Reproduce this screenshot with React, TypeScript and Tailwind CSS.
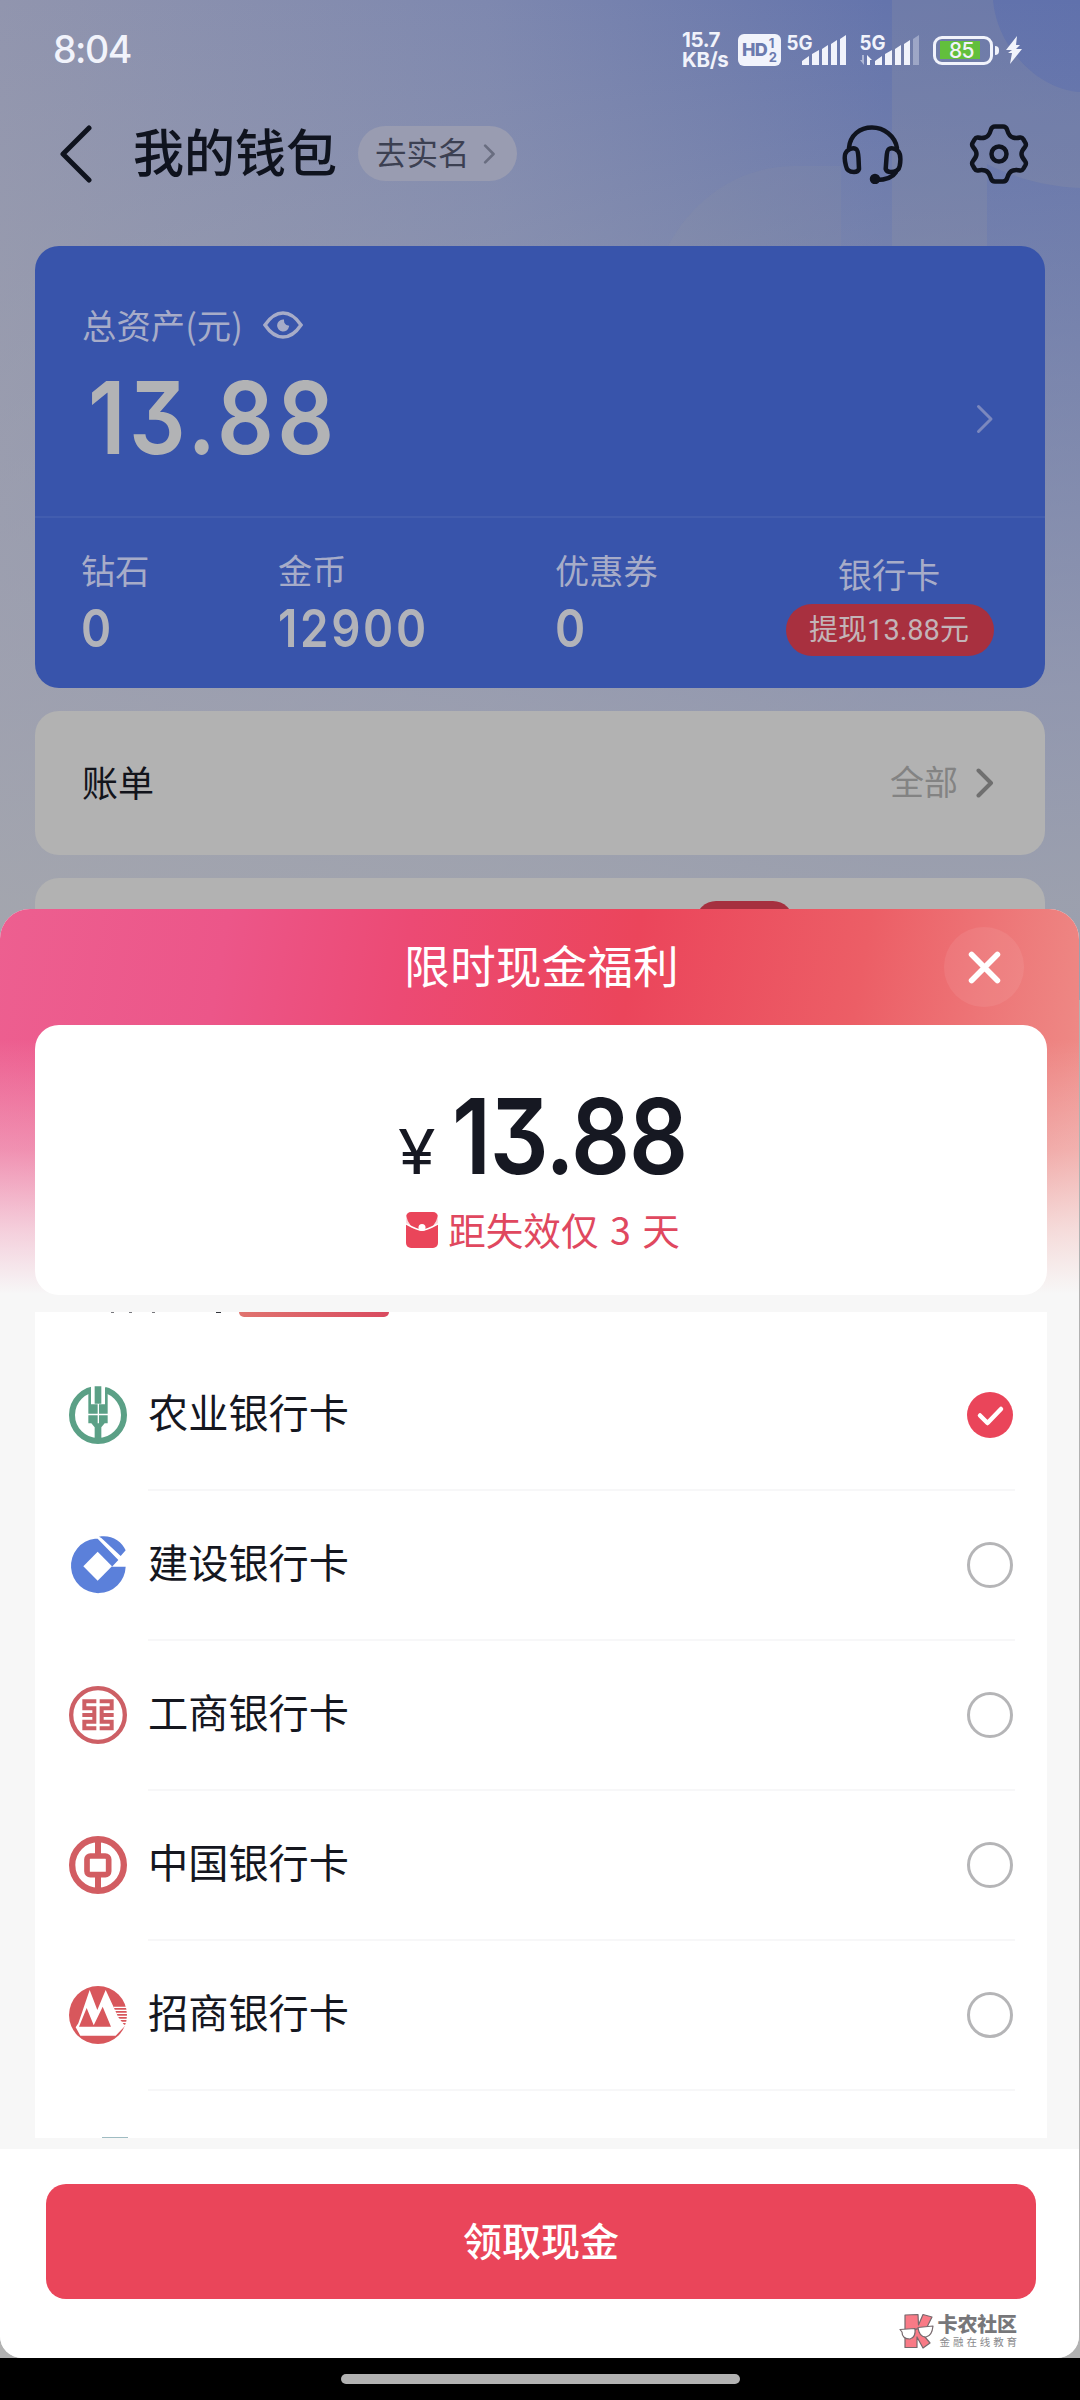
import type { ReactNode } from 'react';
import clsx from 'clsx';

interface Bank {
  name: string;
  logo: ReactNode;
}

// condensed numerals with the flat-topped 3
const digits = "inline-block origin-left scale-x-[0.88] font-['Inter',sans-serif] font-semibold [font-feature-settings:'cv09']";

function Chevron({ className, width = 2 }: { className: string; width?: number }) {
  return (
    <svg viewBox="0 0 18 30" className={className} fill="none" stroke="currentColor" strokeWidth={width} strokeLinecap="round" strokeLinejoin="round">
      <path d="M2.5 2.5 15 15 2.5 27.5" />
    </svg>
  );
}

function AbcLogo() {
  return (
    <svg viewBox="0 0 174 174" className="size-[58px]">
      <circle cx="87" cy="87" r="78" fill="none" stroke="#5ba086" strokeWidth="18" />
      <path d="M66 0h43v62H66z" fill="#fff" />
      <path
        fill="#5ba086"
        d="M77 1h20v52H77zM57 8l9-3v50h20v28H58V24zM117 8l-9-3v50H90v28h26V24zM58 88h28v24H58zM90 88h26v24H90zM67 112h40l-10 12v38H77v-38z"
      />
    </svg>
  );
}

function CcbLogo() {
  return (
    <svg viewBox="0 0 174 174" className="size-[58px]">
      <path fill="#5b80da" d="M78 8A82 82 0 1 0 170 92H129L148 72 86 8z" />
      <path fill="#5b80da" d="M90 2C125-5 158 14 170 43L155 60 97 6z" />
      <path fill="#fff" d="M86 47 129 91 86 134 43 91z" />
    </svg>
  );
}

function IcbcLogo() {
  return (
    <svg viewBox="0 0 174 174" className="size-[58px]" fill="none" stroke="#cd5f65">
      <circle cx="87" cy="87" r="80.5" strokeWidth="13" />
      <path strokeWidth="12" d="M82 46H46V67H76V107H46V127H82M40 87H76M92 46H128V67H98V107H128V127H92M134 87H98" />
    </svg>
  );
}

function BocLogo() {
  return (
    <svg viewBox="0 0 174 174" className="size-[58px]" fill="none" stroke="#d25d62">
      <circle cx="87" cy="87" r="77.5" strokeWidth="19" />
      <rect x="54" y="60" width="65" height="56" rx="10" strokeWidth="17" />
      <path d="M87 12v44M87 120v44" strokeWidth="18" />
    </svg>
  );
}

function CmbLogo() {
  return (
    <svg viewBox="0 0 174 174" className="size-[58px]">
      <circle cx="87" cy="87" r="87" fill="#d8575c" />
      <path fill="#fff" d="M62 12 85 72 110 12 148 94 168 120 140 149H34L20 124 28 112z" />
      <path fill="#d8575c" d="M53 66 30 122H76zM101 62 72 122H126z" />
      <path stroke="#fff" strokeWidth="3.500" d="M134 64h40M138 73h36M142 82h32M146 91h28M150 100h24M154 109h20M158 118h14" />
    </svg>
  );
}

const banks: Bank[] = [
  { name: '农业银行卡', logo: <AbcLogo /> },
  { name: '建设银行卡', logo: <CcbLogo /> },
  { name: '工商银行卡', logo: <IcbcLogo /> },
  { name: '中国银行卡', logo: <BocLogo /> },
  { name: '招商银行卡', logo: <CmbLogo /> },
];

function Backdrop() {
  return (
    <div className="absolute inset-0 bg-[#b2b2b2]">
      <div className="h-[1000px] bg-[linear-gradient(to_right,#9195ae_0%,#7e88af_45%,#6474ac_82%,#6071ac_100%)]" />
      <div className="absolute inset-x-0 top-0 h-[1000px] bg-[linear-gradient(to_bottom,#a6a8ae00_0px,#a6a8ae40_250px,#a3a5b0bb_690px,#a6a8aed9_900px)]" />
      <svg viewBox="0 0 1080 246" className="absolute left-0 top-0 h-[246px] w-[1080px]" fill="#9c9ca0">
        <path d="M892 0h101c4 48 46 90 87 92v96c-34-2-63-9-93-24v82h-95z" fillOpacity="0.2" />
        <path d="M668 246c28-52 76-80 127-80h46v80z" fillOpacity="0.1" />
      </svg>
    </div>
  );
}

function Signal({ dimLast = false }: { dimLast?: boolean }) {
  return (
    <svg viewBox="0 0 61 36" className="h-9 w-[61px]" fill="#f1f3fb">
      <path d="M16 29l7-5v9h-7zM26 22l7-4v15h-7zM36 17l6-4v20h-6zM45 12l6-4v25h-6z" />
      <path d="M54 7l6-4v30h-6z" fillOpacity={dimLast ? 0.35 : 1} />
      {dimLast && (
        <>
          <path d="M3 23h2v10l-4-5h2z" fillOpacity="0.5" />
          <path d="M8 33V23l5 5h-2v5z" />
        </>
      )}
      <text x="0.500" y="17.500" fontSize="20" fontWeight="700" fontFamily="Inter, sans-serif" textLength="26" lengthAdjust="spacingAndGlyphs">
        5G
      </text>
    </svg>
  );
}

function StatusBar() {
  return (
    <div className="flex h-[100px] items-center pl-[53px] pr-[57px] font-['Inter',sans-serif] text-[#f1f3fb]">
      <span className="text-[37.5px] font-medium leading-none tracking-[-1.5px]">8:04</span>
      <div className="ml-auto flex items-center">
        <div className="w-[50px] text-[20.5px] font-bold leading-[20px] tracking-[-0.4px]">
          <div>15.7</div>
          <div className="tracking-[-0.3px]">KB/s</div>
        </div>
        <div className="ml-[6px] flex h-8 w-[43px] items-center justify-center rounded-[6px] bg-[#f1f3fb] text-[#6b7aae]">
          <span className="text-[18px] font-extrabold leading-none tracking-[-0.8px]">HD</span>
          <span className="ml-[2px] flex flex-col text-[13px] font-bold leading-[14px]">
            <span>1</span>
            <span>2</span>
          </span>
        </div>
        <div className="ml-[5px] flex gap-[12px]">
          <Signal />
          <Signal dimLast />
        </div>
        <div className="ml-[13px] flex h-[29px] w-[60px] items-center rounded-[9px] border-3 border-[#f1f3fb] px-1">
          <div className="flex h-[18px] w-[40px] items-center justify-center bg-[#62bf3c] pl-[3px] text-[21px] font-medium leading-none tracking-[-0.5px]">
            85
          </div>
        </div>
        <div className="ml-[2px] h-[9px] w-[4px] rounded-r-sm bg-[#f1f3fb]" />
        <svg viewBox="0 0 18 30" className="ml-[6px] h-[30px] w-[18px]" fill="#f1f3fb">
          <path d="M12 1 1 15h6l-4 3h4L5 29 17 14h-6l4-4h-4z" />
        </svg>
      </div>
    </div>
  );
}

function TitleBar() {
  return (
    <div className="flex h-[107px] items-center pl-[59px] pr-[51px] text-[#0f131e]">
      <svg viewBox="0 0 34 58" className="h-[58px] w-[34px]" fill="none" stroke="currentColor" strokeWidth="5" strokeLinecap="round" strokeLinejoin="round">
        <path d="M30 3 4 29l26 26" />
      </svg>
      <h1 className="ml-[40px] pb-[6px] text-[51px] font-medium leading-none">我的钱包</h1>
      <div className="ml-[21px] flex h-[55px] w-[159px] items-center rounded-full bg-[#999cb1] pl-[17px] text-[31.5px] leading-none text-[#3c4052]">
        <span className="pb-[4px]">去实名</span>
        <Chevron className="ml-[13px] h-[20px] w-[13px] text-[#696d80]" width={4} />
      </div>
      <svg viewBox="0 0 62 60" className="ml-auto h-[60px] w-[62px]" fill="none" stroke="currentColor" strokeWidth="4.5" strokeLinecap="round" strokeLinejoin="round">
        <path d="M8 24C9 11 19 3.500 31 3.500S54 12 56 24" />
        <path d="M6 27q5-4 9-2q2 1 2.500 9l.5 11q-1 3-5 3-7 0-8-6Q2 31 6 27zM57 27q-5-4-9-2q-2 1-2.500 9l-.8 11q1 3 5 3 8 0 9-6 2-11-1.700-15z" />
        <path d="M55 48q-5 8-20 8" />
        <circle cx="34" cy="55" r="3" fill="currentColor" />
      </svg>
      <svg viewBox="0 0 60 62" className="ml-[66px] h-[62px] w-[60px]" fill="none" stroke="currentColor" strokeWidth="4.500" strokeLinejoin="round">
        <path d="M26 3.500h8q3 0 4 3 2 7 6 8 3 1 7 0 2-.5 3.500 2l2 3.500q1 2-.5 4-3.500 4-3.500 7t3.500 7q1.500 2 .5 4l-2 3.500q-1.500 2.500-3.500 2-4-1-7 0-4 1-6 8-1 3-4 3h-8q-3 0-4-3-2-7-6-8-3-1-7 0-2 .5-3.500-2L3.500 42q-1-2 .5-4 3.500-4 3.500-7T4 24q-1.500-2-.5-4l2-3.500q1.500-2.500 3.500-2 4 1 7 0 4-1 6-8 1-3 4-3z" />
        <circle cx="30" cy="31" r="7.500" />
      </svg>
    </div>
  );
}

function Stat({ label, value, className }: { label: string; value: string; className: string }) {
  return (
    <div className={clsx('flex flex-col', className)}>
      <span className="text-[34.2px] leading-[36px] text-[#a7acc8]">{label}</span>
      <span className={clsx(digits, 'mt-[16px] text-[52px] leading-[52px] tracking-[3px] text-[#b2b3b9]')}>{value}</span>
    </div>
  );
}

function AssetCard() {
  return (
    <section className="mx-[35px] h-[442px] w-[1010px] rounded-[24px] bg-[#3854ab]">
      <div className="flex h-[272px] items-center border-b-2 border-[#425daf] pl-[47px] pr-[51px]">
        <div className="flex h-full flex-col">
          <div className="mt-[60px] flex items-center text-[34.4px] leading-[36px] text-[#a7acc8]">
            总资产(元)
            <svg viewBox="0 0 40 28" className="ml-[20px] mt-[2px] h-[28px] w-[40px]" fill="none" stroke="currentColor" strokeWidth="3.500">
              <path d="M2 14Q10 2 20 2t18 12Q30 26 20 26T2 14z" />
              <path d="M20 9.500a5 5 0 1 0 5 6q-5-1-5-6z" fill="currentColor" strokeWidth="2" />
            </svg>
          </div>
          <div className={clsx(digits, 'ml-[6px] mt-[25px] text-[101px] leading-[100px] tracking-[4px] text-[#b2b3b5]')}>13.88</div>
        </div>
        <Chevron className="ml-auto mt-[158px] h-[30px] w-[18px] self-start text-[#7b88be]" width={3} />
      </div>
      <div className="flex pl-[46px] pt-[33px]">
        <Stat label="钻石" value="0" className="w-[197px]" />
        <Stat label="金币" value="12900" className="w-[277px]" />
        <Stat label="优惠券" value="0" className="w-[231px]" />
        <div className="flex w-[208px] flex-col items-center pt-[4px]">
          <span className="mr-[2px] text-[34.2px] leading-[36px] text-[#a7acc8]">银行卡</span>
          <span className="mt-[13px] flex h-[52px] w-[208px] items-center justify-center rounded-full bg-[#a8303f] pr-[2px] font-['Roboto','Noto_Sans_CJK_SC',sans-serif] text-[29px] leading-none text-[#c3b4b8]">
            提现13.88元
          </span>
        </div>
      </div>
    </section>
  );
}

function WalletPage() {
  return (
    <div className="relative h-[909px] overflow-hidden">
      <StatusBar />
      <TitleBar />
      <div className="flex flex-col gap-[23px] pt-[39px]">
        <AssetCard />
        <section className="mx-[35px] flex h-[144px] w-[1010px] items-center rounded-[24px] bg-[#b2b2b2] pl-[47px] pr-[51px]">
          <span className="pb-[5px] text-[36px] leading-none text-[#12141b]">账单</span>
          <span className="ml-auto pb-[4px] text-[34px] leading-none text-[#838383]">全部</span>
          <Chevron className="ml-[18px] h-[32px] w-[18px] text-[#6f6f6f]" width={4} />
        </section>
        <section className="mx-[35px] h-[160px] w-[1010px] rounded-[24px] bg-[#b2b2b2] pl-[661px] pt-[23px]">
          <div className="h-[40px] w-[97px] rounded-[20px] bg-[#a6303f]" />
        </section>
      </div>
    </div>
  );
}

function BankRow({ bank, checked }: { bank: Bank; checked: boolean }) {
  return (
    <li className="flex h-[150px] items-center pl-[34px] pr-[32px]">
      <div className="pb-[2px]">{bank.logo}</div>
      <div className="ml-[21px] flex h-[150px] flex-1 items-center border-b-2 border-[#f7f7f8]">
        <span className="pb-[7px] text-[40.2px] leading-none text-[#15171f]">{bank.name}</span>
        {checked ? (
          <svg viewBox="0 0 46 46" className="ml-auto mr-[2px] size-[46px]">
            <circle cx="23" cy="23" r="23" fill="#ea455a" />
            <path d="M13 23.500 20.500 31 34 17" fill="none" stroke="#fff" strokeWidth="4.500" strokeLinecap="round" strokeLinejoin="round" />
          </svg>
        ) : (
          <span className="ml-auto mr-[2px] size-[46px] rounded-full border-3 border-[#b5b5b7]" />
        )}
      </div>
    </li>
  );
}

function BankList() {
  return (
    <div className="mx-[35px] mt-[17px] h-[827px] w-[1012px] overflow-hidden bg-white">
      {/* tail of the row scrolled off above */}
      <div className="flex h-[29px] items-start">
        <div className="ml-[76px] flex gap-[15px]">
          <i className="h-px w-[3px] bg-[#77777c]" />
          <i className="h-px w-[3px] bg-[#77777c]" />
          <i className="ml-[5px] h-px w-[3px] bg-[#77777c]" />
          <i className="ml-[46px] h-px w-[5px] bg-[#33353c]" />
        </div>
        <div className="ml-[18px] h-[5px] w-[150px] rounded-b-[6px] bg-[linear-gradient(to_right,#e0736f,#d94a5f)]" />
      </div>
      <ul>
        {banks.map((bank, i) => (
          <BankRow key={bank.name} bank={bank} checked={i === 0} />
        ))}
      </ul>
      {/* next bank's logo, just peeking in */}
      <div className="ml-[67px] mt-[46px] h-[2px] w-[26px] bg-[#9fbcc2]" />
    </div>
  );
}

function Watermark() {
  return (
    <div className="absolute bottom-[9px] right-[59px] flex items-center gap-[3px]">
      <svg viewBox="0 0 36 36" className="h-[36px] w-[36px]" stroke="#77696d" strokeWidth="1.200" strokeLinejoin="round">
        <path d="M6 2 19 1.500 19.500 12 24 1.500 33 4 27 16 21 18 31 30 24 35 18 24V34.500H6z" fill="#f97a86" />
        <path d="M1 16.500 16 15.500q1 9-5 10.500-8 0-8-7zM19 14.500 34 13q-1 10-7 11-7 0-8-9.500z" fill="#fff" />
        <path d="M16 17q1.500-1.500 3-1" fill="none" />
      </svg>
      <div className="flex flex-col text-[#77777a]">
        <span className="text-[20px] font-black leading-[20px] tracking-[-0.200px]">卡农社区</span>
        <span className="mt-[1px] pl-[2px] text-[10.500px] leading-[13px] tracking-[2.900px] text-[#8a8a8d]">金融在线教育</span>
      </div>
    </div>
  );
}

function CashSheet() {
  return (
    <div className="absolute left-0 top-[909px] flex h-[1449px] w-[1079px] flex-col overflow-hidden rounded-t-[30px] rounded-b-[22px] bg-[#f7f7f7]">
      <div className="absolute inset-x-0 top-0 h-[390px] bg-[linear-gradient(100deg,#ed5f90_0%,#ec5689_20%,#ec4a74_36%,#eb455b_56%,#ec5e66_76%,#ee8683_95%,#f09490_100%)]" />
      <div className="absolute inset-x-0 top-0 h-[390px] bg-[linear-gradient(to_bottom,#f7f7f700_130px,#f7f7f755_240px,#f7f7f7bb_320px,#f7f7f7_385px)]" />
      <header className="relative flex h-[116px] items-center justify-center">
        <h2 className="ml-[4px] pb-[4px] text-[45.800px] font-normal leading-none text-white">限时现金福利</h2>
        <button className="absolute right-[55px] top-[18px] flex size-[80px] items-center justify-center rounded-full bg-white/7">
          <svg viewBox="0 0 32 32" className="size-[33px]" stroke="#fff" strokeWidth="5.500" strokeLinecap="round">
            <path d="M3.500 3.500l25 25M28.500 3.500l-25 25" />
          </svg>
        </button>
      </header>
      <section className="relative mx-[35px] h-[270px] w-[1012px] rounded-[24px] bg-white">
        <div className="flex items-baseline pl-[363px] pt-[56px] leading-[110px] text-[#161822]">
          <span className="w-[54px] origin-left scale-x-110 font-['Inter',sans-serif] text-[62px] leading-none">¥</span>
          <span className={clsx(digits, 'text-[105px] tracking-[-1.5px]')}>13.88</span>
        </div>
        <div className="mt-[19px] flex h-[40px] items-center justify-center pl-[4px] text-[37.600px] leading-none text-[#e0485f]">
          <svg viewBox="0 0 32 36" className="mr-[10px] h-[36px] w-[32px]">
            <rect width="32" height="36" rx="5" fill="#ea455a" />
            <path d="M0 12Q2 13 6 15Q12 18 16 18T26 15Q30 13 32 12" fill="none" stroke="#fff" strokeWidth="1.500" />
            <path d="M0 3v9l5 2Q1 9 0 3zM32 3v9l-5 2q4-5 5-11z" fill="#fff" fillOpacity="0.8" />
            <circle cx="16" cy="15.500" r="3.500" fill="#fff" />
          </svg>
          <span className="pb-[3px] [word-spacing:3px]">距失效仅 3 天</span>
        </div>
      </section>
      <BankList />
      <footer className="relative mt-[11px] h-[209px] bg-white pl-[46px] pt-[35px]">
        <button className="flex h-[115px] w-[990px] items-center justify-center rounded-[20px] bg-[#ea455a] pb-[5px] text-[39px] font-medium leading-none text-white">
          领取现金
        </button>
        <Watermark />
      </footer>
    </div>
  );
}

export default function App() {
  return (
    <div className="relative h-[2400px] w-[1080px] overflow-hidden font-['Noto_Sans_CJK_SC',sans-serif]">
      <Backdrop />
      <WalletPage />
      <CashSheet />
      <div className="absolute inset-x-0 bottom-0 flex h-[42px] justify-center bg-black pt-[16px]">
        <div className="h-[10px] w-[399px] rounded-full bg-[#b2b2b2]" />
      </div>
    </div>
  );
}
